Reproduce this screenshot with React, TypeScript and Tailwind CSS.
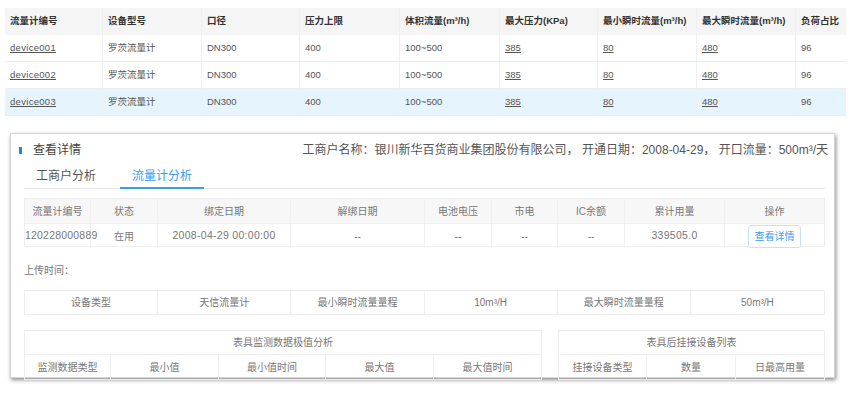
const head = ['流量计编号', '设备型号', '口径', '压力上限', '体积流量(m³/h)', '最大压力(KPa)', '最小瞬时流量(m³/h)', '最大瞬时流量(m³/h)', '负荷占比'];

const devices = [
  { id: 'device001', active: false },
  { id: 'device002', active: false },
  { id: 'device003', active: true },
];

const topCols = 'grid grid-cols-[98px_99px_98px_100px_100px_98px_99px_99px_1fr]';
const innerCols = 'grid grid-cols-[66px_67px_133px_134px_67px_66px_67px_100px_1fr]';

const innerHead = ['流量计编号', '状态', '绑定日期', '解绑日期', '电池电压', '市电', 'IC余额', '累计用量', '操作'];

function Cell({ children, className = '' }: { children?: React.ReactNode; className?: string }) {
  return <div className={`flex items-center border-r border-[#f0f0f0] last:border-r-0 ${className}`}>{children}</div>;
}

export default function App() {
  return (
    <div className="w-[850px] h-[394px] bg-white overflow-hidden relative font-['Liberation_Sans','Noto_Sans_CJK_SC',sans-serif]">
      {/* device list */}
      <div className="ml-[5px] mt-[8px] w-[841px] text-[9.5px]">
        <div className={`${topCols} h-[27px] bg-[#f5f5f5] text-[#333] font-bold`}>
          {head.map((h) => (
            <Cell key={h} className="pl-[5px]">{h}</Cell>
          ))}
        </div>
        {devices.map((d) => (
          <div
            key={d.id}
            className={`${topCols} h-[27px] border-b border-[#eeeeee] text-[#555] ${d.active ? 'bg-[#e6f4fd]' : 'bg-white'}`}
          >
            <Cell className="pl-[5px]"><span className="underline tracking-[0.3px]">{d.id}</span></Cell>
            <Cell className="pl-[5px]">罗茨流量计</Cell>
            <Cell className="pl-[5px]">DN300</Cell>
            <Cell className="pl-[5px]">400</Cell>
            <Cell className="pl-[5px]">100~500</Cell>
            <Cell className="pl-[5px]"><span className="underline">385</span></Cell>
            <Cell className="pl-[5px]"><span className="underline">80</span></Cell>
            <Cell className="pl-[5px]"><span className="underline">480</span></Cell>
            <Cell className="pl-[5px]">96</Cell>
          </div>
        ))}
      </div>

      {/* detail panel */}
      <div className="absolute left-[10px] top-[133px] w-[825px] h-[245px] bg-white border border-[#d6d6d6] shadow-[1px_2px_4px_rgba(0,0,0,0.45)]">
        <div className="flex items-center justify-between h-[28px] mt-[2px] pl-[8px] pr-[6px]">
          <div className="flex items-center gap-[11px]">
            <span className="w-[3px] h-[7px] bg-[#1e88e5]" />
            <span className="text-[12px] text-[#444]">查看详情</span>
          </div>
          <span className="text-[12px] text-[#555] whitespace-nowrap">
            工商户名称：银川新华百货商业集团股份有限公司， 开通日期：2008-04-29， 开口流量：500m³/天
          </span>
        </div>

        <div className="ml-[13px] mr-[9px] h-[221px] overflow-hidden">
          {/* tabs */}
          <div className="flex h-[25px] border-b border-[#e6e6e6] text-[12px]">
            <div className="w-[96px] pl-[12px] flex items-center text-[#555]">工商户分析</div>
            <div className="w-[84px] flex items-center justify-center text-[#3a9cf0] border-b-2 border-[#3a9cf0] -mb-px">流量计分析</div>
          </div>

          {/* flowmeter table */}
          <div className="mt-[9px] border border-[#eeeeee] text-[10px] text-[#777]">
            <div className={`${innerCols} h-[24px] bg-[#f7f7f7]`}>
              {innerHead.map((h) => (
                <Cell key={h} className="justify-center">{h}</Cell>
              ))}
            </div>
            <div className={`${innerCols} h-[23px] border-t border-[#f0f0f0]`}>
              <Cell className="text-[10.5px] tracking-[0.2px]">120228000889</Cell>
              <Cell className="justify-center">在用</Cell>
              <Cell className="justify-center text-[10.5px] tracking-[0.3px]">2008-04-29 00:00:00</Cell>
              <Cell className="justify-center">--</Cell>
              <Cell className="justify-center">--</Cell>
              <Cell className="justify-center">--</Cell>
              <Cell className="justify-center">--</Cell>
              <Cell className="justify-center text-[10.5px] tracking-[0.3px]">339505.0</Cell>
              <Cell className="justify-center">
                <span className="mt-[1px] w-[53px] h-[23px] flex items-center justify-center rounded-[3px] border border-[#c6e2fb] text-[#3a9cf0] bg-white">查看详情</span>
              </Cell>
            </div>
          </div>

          <div className="mt-[16px] text-[10px] text-[#777]">上传时间：</div>

          {/* device specs */}
          <div className="mt-[12px] grid grid-cols-6 h-[25px] border border-[#eeeeee] text-[10px] text-[#777]">
            {['设备类型', '天信流量计', '最小瞬时流量量程', '10m³/H', '最大瞬时流量量程', '50m³/H'].map((t) => (
              <Cell key={t} className="justify-center">{t}</Cell>
            ))}
          </div>

          {/* bottom tables */}
          <div className="mt-[15px] flex gap-[16px] text-[10px] text-[#777]">
            <div className="w-[518px] border border-[#eeeeee]">
              <div className="h-[24px] flex items-center justify-center border-b border-[#f0f0f0]">表具监测数据极值分析</div>
              <div className="grid grid-cols-[86px_108px_107px_108px_1fr] h-[24px]">
                {['监测数据类型', '最小值', '最小值时间', '最大值', '最大值时间'].map((t) => (
                  <Cell key={t} className="justify-center">{t}</Cell>
                ))}
              </div>
            </div>
            <div className="flex-1 border border-[#eeeeee]">
              <div className="h-[24px] flex items-center justify-center border-b border-[#f0f0f0]">表具后挂接设备列表</div>
              <div className="grid grid-cols-[88px_89px_1fr] h-[24px]">
                {['挂接设备类型', '数量', '日最高用量'].map((t) => (
                  <Cell key={t} className="justify-center">{t}</Cell>
                ))}
              </div>
            </div>
          </div>
        </div>
      </div>
    </div>
  );
}
